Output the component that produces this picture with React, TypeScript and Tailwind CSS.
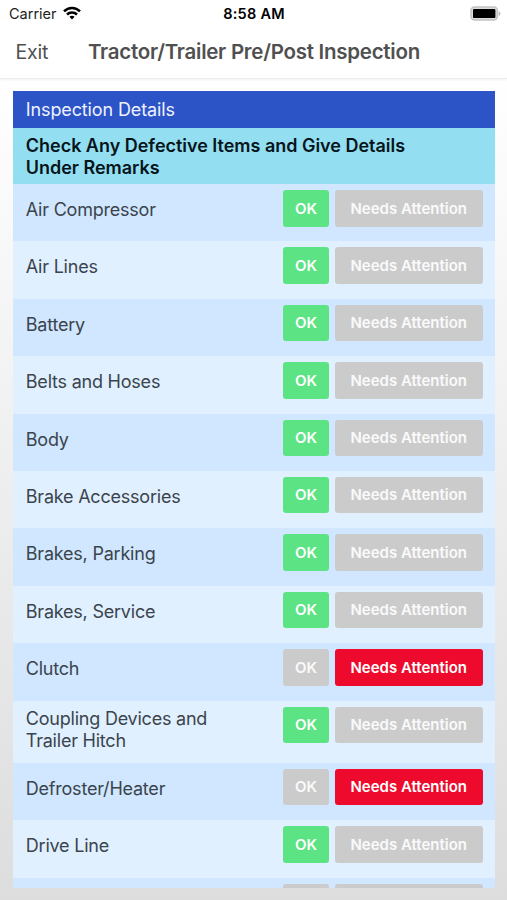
import clsx from "clsx";

type Item = {
  name: string;
  defective?: boolean;
};

const items: Item[] = [
  { name: "Air Compressor" },
  { name: "Air Lines" },
  { name: "Battery" },
  { name: "Belts and Hoses" },
  { name: "Body" },
  { name: "Brake Accessories" },
  { name: "Brakes, Parking" },
  { name: "Brakes, Service" },
  { name: "Clutch", defective: true },
  { name: "Coupling Devices and Trailer Hitch" },
  { name: "Defroster/Heater", defective: true },
  { name: "Drive Line" },
];

function WifiIcon() {
  return (
    <svg className="mb-[2px] ml-[6px] h-[14px] w-[18px]" viewBox="0 0 18 14" fill="none" stroke="#000" strokeWidth="2.5">
      <path d="M1 5.4C5.4.8 12.6.8 17 5.4" />
      <path d="M4 8.5c2.8-2.800 7.2-2.800 10 0" />
      <path d="M6.4 10.8 9 13.6l2.6-2.8c-1.500-1.400-3.700-1.400-5.200 0Z" fill="#000" stroke="none" />
    </svg>
  );
}

function BatteryIcon() {
  return (
    <svg className="h-[15px] w-[31px]" viewBox="0 0 31 15">
      <rect x="1" y="0.9" width="26.4" height="13" rx="3.6" fill="#ddd" stroke="#c2c2c2" strokeWidth="1.5" />
      <rect x="3" y="2.9" width="22.4" height="9.2" rx="1.2" fill="#000" />
      <path d="M28.7 5.2c2.3.8 2.3 3.8 0 4.600Z" fill="#b9b9b9" />
    </svg>
  );
}

function StatusBar() {
  return (
    <div className="grid h-[27px] grid-cols-3 items-center pl-[9px] pr-[6px] text-[14.5px] text-black">
      <div className="flex items-center">
        <span className="text-[#222]">Carrier</span>
        <WifiIcon />
      </div>
      <span className="-ml-[2px] text-center font-semibold tracking-[0.25px]">8:58 AM</span>
      <div className="flex justify-end">
        <BatteryIcon />
      </div>
    </div>
  );
}

function ItemRow({ item }: { item: Item }) {
  return (
    <div className="flex min-h-[57.4px] shrink-0 items-start pl-[12.5px] pr-3 pt-[6px] odd:bg-[#d0e7ff] even:bg-[#e0f0ff]">
      <div className="flex min-h-[40px] w-[205px] items-center text-[18px] leading-[22px] tracking-[-0.22px] text-[#3b444c]">
        <span className={clsx(item.name.length > 24 && "pt-[1px] pb-[11.4px]")}>{item.name}</span>
      </div>
      <div className="ml-auto flex gap-[6px] text-[15px] font-semibold text-white">
        <button
          className={clsx(
            "h-[36.5px] w-[45.5px] rounded-[3px] pt-[1px]",
            item.defective ? "bg-[#cbcbcb] text-white/90" : "bg-[#5be384]"
          )}
        >
          OK
        </button>
        <button
          className={clsx(
            "h-[36.5px] w-[148px] rounded-[3px] pt-[1px]",
            item.defective ? "bg-[#ed0a2c]" : "bg-[#cbcbcb] text-white/90"
          )}
        >
          Needs Attention
        </button>
      </div>
    </div>
  );
}

export default function App() {
  return (
    <div className="flex h-[900px] w-[507px] flex-col overflow-hidden bg-white font-['Inter',sans-serif]">
      <StatusBar />

      {/* Nav bar */}
      <header className="relative flex h-[52px] items-center border-b border-[#ececec] text-[#505050] shadow-[0_1px_2px_rgba(0,0,0,0.05)]">
        <span className="w-[72.5px] pl-[15.5px] text-[19.5px] tracking-[-0.2px]">Exit</span>
        <h1 className="ml-[15.5px] whitespace-nowrap text-[20.5px] font-semibold tracking-[-0.26px]">
          Tractor/Trailer Pre/Post Inspection
        </h1>
      </header>

      <main className="flex min-h-0 flex-1 flex-col bg-linear-to-b from-white to-[#dddddd] pb-3 pl-[13.3px] pr-[12.3px] pt-[12px]">
        <div className="flex min-h-0 flex-1 flex-col overflow-hidden">
          <div className="flex h-[37px] shrink-0 items-center bg-[#2c54c6] pl-[12.5px] text-[18px] tracking-[-0.12px] text-[#eef2ff]">
            Inspection Details
          </div>
          <div className="h-[56px] shrink-0 bg-[#93dff1] pl-[12.5px] pt-[7px] text-[18px] font-semibold leading-[22px] tracking-[-0.02px] text-[#07141a]">
            Check Any Defective Items and Give Details
            <br />
            Under Remarks
          </div>
          <div className="flex flex-col">
            {items.map((item) => (
              <ItemRow key={item.name} item={item} />
            ))}
            {/* next row, cut off by the scroll area */}
            <div className="flex h-[57px] shrink-0 justify-end gap-[6px] bg-[#d0e7ff] pr-3 pt-[6px]">
              <div className="h-[36.5px] w-[45.5px] rounded-[3px] bg-[#cbcbcb]" />
              <div className="h-[36.5px] w-[148px] rounded-[3px] bg-[#cbcbcb]" />
            </div>
          </div>
        </div>
      </main>
    </div>
  );
}
